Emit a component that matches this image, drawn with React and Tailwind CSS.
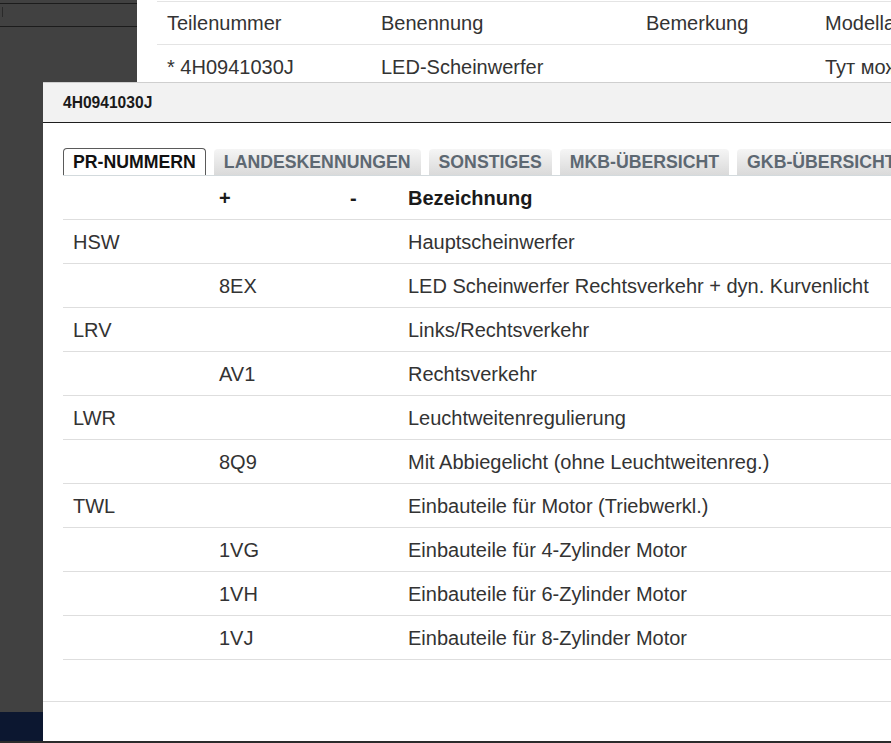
const rows = [
  ["HSW", "", "Hauptscheinwerfer"],
  ["", "8EX", "LED Scheinwerfer Rechtsverkehr + dyn. Kurvenlicht"],
  ["LRV", "", "Links/Rechtsverkehr"],
  ["", "AV1", "Rechtsverkehr"],
  ["LWR", "", "Leuchtweitenregulierung"],
  ["", "8Q9", "Mit Abbiegelicht (ohne Leuchtweitenreg.)"],
  ["TWL", "", "Einbauteile für Motor (Triebwerkl.)"],
  ["", "1VG", "Einbauteile für 4-Zylinder Motor"],
  ["", "1VH", "Einbauteile für 6-Zylinder Motor"],
  ["", "1VJ", "Einbauteile für 8-Zylinder Motor"],
];

const tabs = ["LANDESKENNUNGEN", "SONSTIGES", "MKB-ÜBERSICHT", "GKB-ÜBERSICHT"];

const App = () => {
  return (
    <div className="relative w-[891px] h-[743px] overflow-hidden bg-[#2b2b2b] font-['Liberation_Sans',Arial,sans-serif]">
      {/* page behind the dialog */}
      <div className="flex h-[741px]">
        <div className="w-[137px] shrink-0 flex flex-col bg-[#414141]">
          <div className="mt-[3px] h-[24px] border-y border-[#1c1c1c] flex">
            <div className="w-[3px] border-r border-[#2a2a2a] mt-[3px] h-[10px]" />
          </div>
          <div className="flex-1" />
          <div className="h-[29px] bg-[#0c1730]" />
        </div>
        <div className="flex-1 min-w-0 overflow-hidden bg-white pl-[20px] text-[20px] text-[#333]">
          <div className="mt-px border-t border-[#e4e4e4] flex h-[44px] items-center border-b">
            <div className="w-[214px] shrink-0 pl-[10px]">Teilenummer</div>
            <div className="w-[265px] shrink-0 pl-[10px]">Benennung</div>
            <div className="w-[179px] shrink-0 pl-[10px]">Bemerkung</div>
            <div className="pl-[10px] whitespace-nowrap">Modellangaben</div>
          </div>
          <div className="flex h-[44px] items-center border-b border-[#e4e4e4]">
            <div className="w-[214px] shrink-0 pl-[10px]">* 4H0941030J</div>
            <div className="w-[265px] shrink-0 pl-[10px]">LED-Scheinwerfer</div>
            <div className="w-[179px] shrink-0 pl-[10px]"></div>
            <div className="pl-[10px] whitespace-nowrap">Тут можно</div>
          </div>
        </div>
      </div>

      {/* dialog */}
      <div className="absolute left-[43px] top-[82px] -right-[40px] bottom-[2px] bg-white flex flex-col">
        <div className="h-[41px] bg-[#f2f2f2] border-t border-[#cfcfcf] border-b border-b-[#1e1e1e] flex items-center pl-[20px]">
          <span className="text-[15.6px] font-bold text-[#1a1a1a]">4H0941030J</span>
        </div>

        <div className="pl-[20px] pt-[25px] flex-1">
          <div className="flex items-end gap-[8px] border-b border-[#d3dadd] whitespace-nowrap">
            <div className="h-[27px] px-[9px] flex items-center bg-white border border-b-0 border-[#5a5a5a] rounded-t-[4px] text-[17.7px] font-bold text-[#111]">
              PR-NUMMERN
            </div>
            {tabs.map((t) => (
              <div
                key={t}
                className="h-[26px] px-[10px] flex items-center rounded-t-[4px] bg-gradient-to-b from-[#f5f5f5] to-[#dadada] text-[17.7px] font-bold text-[#5d6872]"
              >
                {t}
              </div>
            ))}
          </div>

          <div className="text-[20px] text-[#333]">
            <div className="flex h-[44px] items-center border-b border-[#dedede] font-bold text-[#1a1a1a]">
              <div className="w-[146px] pl-[10px]"></div>
              <div className="w-[131px] pl-[10px]">+</div>
              <div className="w-[58px] pl-[10px]">-</div>
              <div className="pl-[10px]">Bezeichnung</div>
            </div>
            {rows.map((r, i) => (
              <div key={i} className="flex h-[44px] items-center border-b border-[#dedede]">
                <div className="w-[146px] pl-[10px]">{r[0]}</div>
                <div className="w-[131px] pl-[10px]">{r[1]}</div>
                <div className="w-[58px] pl-[10px]"></div>
                <div className="pl-[10px] whitespace-nowrap">{r[2]}</div>
              </div>
            ))}
          </div>
        </div>

        <div className="h-[40px] border-t border-[#dedede]" />
      </div>
    </div>
  );
};

export default App;
